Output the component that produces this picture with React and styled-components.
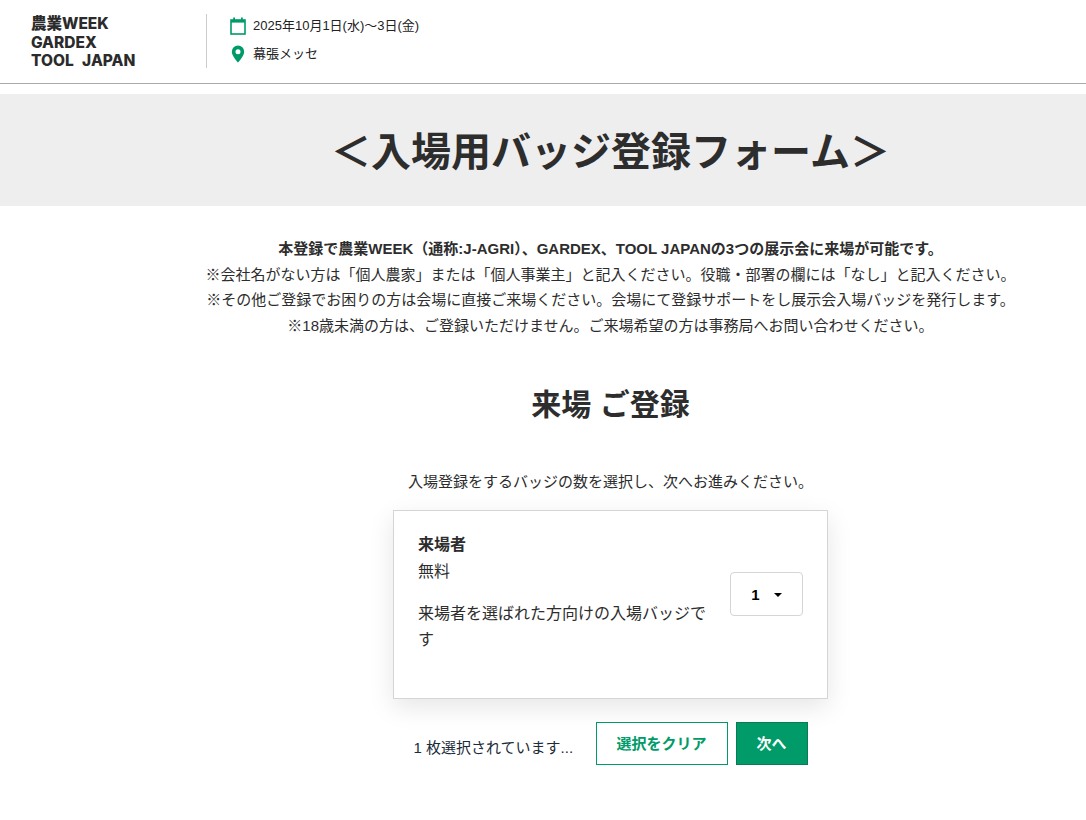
import React from "react";
import styled, { createGlobalStyle } from "styled-components";

const Global = createGlobalStyle`
  html, body { margin: 0; padding: 0; background: #fff; }
  body { font-family: "Liberation Sans", "Noto Sans CJK JP", sans-serif; color: #333; }
`;
const Header = styled.header`
  height: 83px; border-bottom: 1px solid #aaa; display: flex; align-items: flex-start;
  padding-left: 31px; box-sizing: content-box;
`;
const Logo = styled.div`
  width: 175px; height: 54px; box-sizing: content-box; margin-top: 14px; border-right: 1px solid #ccc;
  font-family: Inter, "Noto Sans CJK JP", sans-serif; font-weight: 800; font-size: 15.5px; line-height: 18.5px; color: #2b2b2b;
  word-spacing: 5px;
`;
const LogoText = styled.div`
  padding-top: 1px;
`;
const Info = styled.div`
  margin-left: 23px; padding-top: 17px; display: flex; flex-direction: column; gap: 10px;
`;
const InfoRow = styled.div`
  display: flex; align-items: center; gap: 7px; font-size: 13px; line-height: 18px; color: #222;
`;
const Banner = styled.div`
  margin-top: 10px; height: 112px; box-sizing: border-box; background: #eee; padding: 4px 0 0 135px;
  display: flex; align-items: center; justify-content: center;
`;
const Title = styled.h1`
  margin: 0; font-size: 40px; line-height: 56px; font-weight: 700; color: #2d2d2d;
`;
const Main = styled.main`
  padding-left: 135px; display: flex; flex-direction: column; align-items: center;
`;
const Notice = styled.div`
  margin-top: 30px; text-align: center; font-size: 15px; line-height: 25.5px; color: #2d2d2d; white-space: nowrap;
  strong { font-weight: 700; }
`;
const Heading = styled.h2`
  margin: 47px 0 0; font-size: 30px; line-height: 40px; font-weight: 700; color: #2d2d2d;
`;
const Lead = styled.p`
  margin: 47px 0 0; font-size: 15px; line-height: 20px; color: #2d2d2d;
`;
const Card = styled.section`
  margin-top: 18px; width: 435px; height: 189px; box-sizing: border-box; border: 1px solid #d5d5d5; background: #fff;
  box-shadow: 0 8px 24px rgba(0,0,0,.1); padding: 20px 24px 0; display: flex; align-items: flex-start;
`;
const CardBody = styled.div`
  width: 295px; font-size: 16px; color: #2d2d2d;
`;
const CardName = styled.div`
  font-size: 16px; font-weight: 700; line-height: 27px; margin-bottom: 1px;
`;
const CardPrice = styled.div`
  font-size: 16px; line-height: 26px; margin-bottom: 16px;
`;
const CardDesc = styled.div`
  font-size: 16px; line-height: 26px;
`;
const Select = styled.div`
  margin: 41px 0 0 17px; width: 73px; height: 44px; box-sizing: border-box; border: 1px solid #d5d5d5; border-radius: 4px;
  display: flex; align-items: center; justify-content: center; gap: 14px;
  font-size: 15px; font-weight: 700; color: #000;
`;
const Caret = styled.span`
  width: 0; height: 0; margin-top: 2px; border-left: 4px solid transparent; border-right: 4px solid transparent; border-top: 4px solid #000;
`;
const Actions = styled.div`
  margin-top: 23px; display: flex; align-items: flex-start; width: 394px;
`;
const Status = styled.div`
  margin-top: 16px; width: 182px; font-size: 15px; line-height: 20px; color: #1c2b3a; white-space: nowrap;
`;
const Button = styled.button`
  height: 43px; box-sizing: border-box; font-family: inherit; font-size: 15px; font-weight: 700; padding: 0 0 2px; cursor: pointer;
  border: 1px solid ${p => p.$primary ? "#0b7a53" : "#009b68"};
  background: ${p => p.$primary ? "#009b68" : "#fff"};
  color: ${p => p.$primary ? "#fff" : "#009b68"};
  width: ${p => p.$w}px; margin-left: ${p => p.$ml || 0}px;
`;

const Cal = () => (
  <svg width="16" height="18" viewBox="0 0 16 18" fill="none">
    <rect x="1" y="3" width="14" height="14" stroke="#009b68" strokeWidth="1.6" />
    <rect x="1" y="3" width="14" height="2.6" fill="#009b68" />
    <rect x="3.2" y="0.5" width="1.8" height="4" fill="#009b68" />
    <rect x="11" y="0.5" width="1.8" height="4" fill="#009b68" />
  </svg>
);
const Pin = () => (
  <svg width="16" height="18" viewBox="0 0 16 18">
    <path fillRule="evenodd" fill="#009b68" d="M8 0.5a6.2 6.2 0 0 0-6.2 6.2C1.8 11 8 17.5 8 17.5s6.200-6.500 6.200-10.800A6.200 6.200 0 0 0 8 0.500zM8 4.200a2.500 2.500 0 1 1 0 5a2.500 2.500 0 0 1 0-5z" />
  </svg>
);

export default function App() {
  return (
    <>
      <Global />
      <Header>
        <Logo><LogoText>農業WEEK<br />GARDEX<br />TOOL JAPAN</LogoText></Logo>
        <Info>
          <InfoRow><Cal />2025年10月1日(水)～3日(金)</InfoRow>
          <InfoRow><Pin />幕張メッセ</InfoRow>
        </Info>
      </Header>
      <Banner><Title>＜入場用バッジ登録フォーム＞</Title></Banner>
      <Main>
        <Notice>
          <strong>本登録で農業WEEK（通称:J-AGRI）、GARDEX、TOOL JAPANの3つの展示会に来場が可能です。</strong><br />
          ※会社名がない方は「個人農家」または「個人事業主」と記入ください。役職・部署の欄には「なし」と記入ください。<br />
          ※その他ご登録でお困りの方は会場に直接ご来場ください。会場にて登録サポートをし展示会入場バッジを発行します。<br />
          ※18歳未満の方は、ご登録いただけません。ご来場希望の方は事務局へお問い合わせください。
        </Notice>
        <Heading>来場 ご登録</Heading>
        <Lead>入場登録をするバッジの数を選択し、次へお進みください。</Lead>
        <Card>
          <CardBody>
            <CardName>来場者</CardName>
            <CardPrice>無料</CardPrice>
            <CardDesc>来場者を選ばれた方向けの入場バッジです</CardDesc>
          </CardBody>
          <Select>1<Caret /></Select>
        </Card>
        <Actions>
          <Status>1 枚選択されています...</Status>
          <Button $w={132}>選択をクリア</Button>
          <Button $primary $w={72} $ml={8}>次へ</Button>
        </Actions>
      </Main>
    </>
  );
}
